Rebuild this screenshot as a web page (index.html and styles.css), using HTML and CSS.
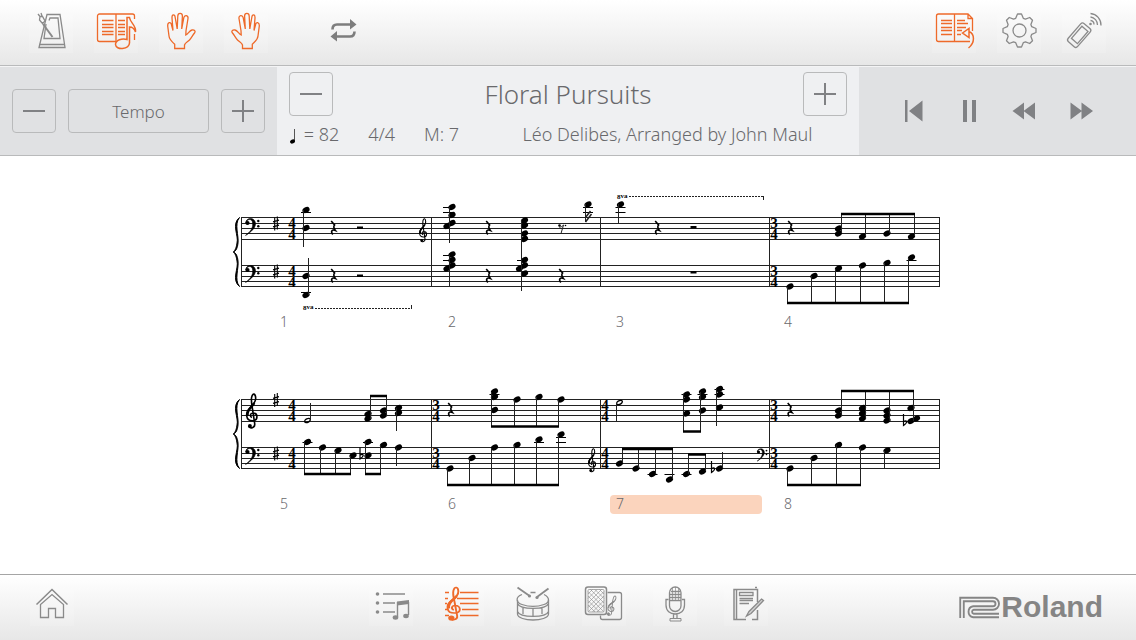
FILE: index.html
```html
<!DOCTYPE html>
<html lang="en">
    <head>
        <meta charset="utf-8">
        <title>Floral Pursuits</title>
        <link rel="stylesheet" href="styles.css">
    </head>
    <body>
        <svg class="defs" aria-hidden="true">
            <defs>
                <ellipse id="n" rx="3.8" ry="2.7" transform="rotate(-28)" />
                <ellipse id="half" rx="3.1" ry="1.8" transform="rotate(-28)" fill="none" stroke="#000" stroke-width="1.3" />
                <path id="led" d="M-5 0H5" stroke="#000" />
                <path id="rest" d="M-1.8-7 1.6-3C0-1.400.4-.2 2.400 2.400-.8 1.200-2.800 3-.2 6.400" fill="none" stroke="#000" stroke-width="1.6" />
                <path id="hrest" d="M-3-1H3V1.5H-3z" />
                <path id="sharp" d="M-1.3-6V7M1.3-7V6M-3-1.6 3-3.4M-3 3.4 3 1.6" stroke="#000" stroke-width="1.1" />
                <path id="flat" d="M-1.5-8V3.5C3 .5 2.5-2.5-1.5-.5" fill="none" stroke="#000" stroke-width="1.2" />
                <path id="treble" d="M-.6 2.6C-3 1.6-2.6-1.9.6-2 5.6-2 6 5.6.2 5.8-7 6-7.6-2.6-2.4-7.2.8-10 3.4-13 3.2-17 3-21.5.2-22.6-.9-17.6-1.6-14-.6-9.6 0-6L2.2 8.6C2.8 12.8-2.6 14.4-3.8 11" fill="none" stroke="currentColor" stroke-width="1.6" />
                <g id="gclef">
                    <use href="#treble" />
                    <path d="M-4.8 1C-5.6-3-3.8-5.6-1-8.4L1.8-12" fill="none" stroke="currentColor" stroke-width="2.4" />
                    <circle cx="-2.6" cy="11" r="2" fill="currentColor" />
                </g>
                <g id="fclef">
                    <circle cx="0" cy="0" r="2.1" />
                    <path d="M-1.6 0C-2-5.6 7.4-6.6 8 .4 8.4 6-.2 11.6-2 12.4 3.4 8.4 5.4 5 5.2.4 5-5.2-.8-4.2-1.6 0z" stroke="#000" stroke-width=".6" />
                    <circle cx="10.8" cy="-2" r="1.2" />
                    <circle cx="10.8" cy="3.2" r="1.2" />
                </g>
                <g id="staves" fill="none" stroke="#222">
                    <path d="M241 217.5H940M241 223.5H940M241 228.5H940M241 233.5H940M241 239.5H940" />
                    <path d="M241 265.5H940M241 271.5H940M241 276.5H940M241 281.5H940M241 286.5H940" />
                    <path d="M241.5 217V287M431.5 217V287M600.5 217V287M769.5 217V287M939.5 217V287" />
                    <path d="M239.500 217.500C231 224 239 236 237 243 236.500 247 235.500 250 233.500 252 235.500 254 236.500 257 237 261 239 268 231 280 239.500 286.500 234 280 239 268 238 261 237.500 256 236 253 233.500 252 236 251 237.500 248 238 243 239 236 234 224 239.500 217.500z" fill="#000" stroke="#000" />
                </g>
                <path id="hand" d="M15.700 39.500V35.300C12 32 10.200 30 10 27L8.700 17C8.500 13 12 12.500 12.400 15.500L14 21.500 13 9C12.800 5 15.800 5 16.200 8.500L18.200 20 18.800 7C19 3.400 23.300 3.400 23.400 7L22.700 20 24.800 8.600C25.500 5.500 29.500 6 29 9.500L27 21.700 26.800 26C29 25 30.600 21.500 33 21 35.500 20.600 37 22 35.500 24 33.500 26.500 32.500 29 30.500 31 28.500 33 26 34 25.500 36V39.500z" />
            </defs>
        </svg>

        <header class="bar topbar">
            <button class="icon" aria-label="Metronome">
                <svg viewBox="0 0 44 44"><path d="M18 5.500H31L36 38.500H10Z" /><path d="M10.500 35.500H35.500M17 15 15 29.500H31L29 9H21L20 11.500" /><path d="M14 15 23.500 28" stroke-width="2" /><path d="M9 5 11 7.500 10.500 11 13.500 14.500 16 12 13.500 7.500 11 7.500M12 4 13 7" /></svg>
            </button>
            <button class="icon on" aria-label="Score with notes">
                <svg viewBox="0 0 44 44">
                    <path d="M22 32.500H5.500a2 2 0 0 1-2-2V7a2 2 0 0 1 2-2H38.500a2 2 0 0 1 2 2V10M40.500 25V31M22 5V32.500" />
                    <path d="M8 11.500H19.500M8 15.500H19.500M8 18.500H19.500M8 22.500H19.500M8 25.500H19.500M24 11.500H31M24 15.500H31M24 18.500H31M24 22.500H31M24 25.500H31" />
                    <path d="M33 30V8.500H35.500C36 14 42.500 16 41.500 23 40 18.500 37.500 18 35.500 18V34C35 40.500 22 41.500 21.500 35.500 21.500 31 28 29 33 30.500z" stroke-width="1.500" />
                </svg>
            </button>
            <button class="icon on" aria-label="Left hand">
                <svg viewBox="0 0 44 44"><use href="#hand" /></svg>
            </button>
            <button class="icon on" aria-label="Right hand">
                <svg viewBox="0 0 44 44"><use href="#hand" transform="translate(44) scale(-1 1)" /></svg>
            </button>
            <button class="icon plain repeat" aria-label="Repeat">
                <svg viewBox="0 0 44 44"><path d="M10.500 20.500C10.500 17 12 15.500 15 15.500H29M32.500 22.500C32.500 26 31 27.500 28 27.500H14" stroke-width="2.600" /><path class="solid" d="M28 10 34.500 15.500 28 20.500zM15 22 8.500 27.500 15 32.500z" /></svg>
            </button>
            <button class="icon on first-right" aria-label="Page turning">
                <svg viewBox="0 0 44 44">
                    <path d="M38 32.500H6.500a2 2 0 0 1-2-2V7a2 2 0 0 1 2-2H36L40.500 9.500V22M36 5V9.500H40.500M22.500 5V32.500" />
                    <path d="M9 11.500H20M9 14.500H20M9 18.500H20M9 21.500H20M9 25.500H20M25 11.500H33M25 14.500H36M25 18.500H34M25 21.500H30M25 25.500H29" />
                    <path d="M30.500 24 37 19.500V28.500zM37 22.500C43 25 43 34 36.500 39" stroke-width="1.500" />
                </svg>
            </button>
            <button class="icon" aria-label="Settings">
                <svg viewBox="0 0 44 44"><g transform="translate(22.500 21.500)"><path d="M-3.800-12.200-2-16.500H2L3.800-12.200 6-11.400 10.200-13 13-10.200 11.400-6 12.200-3.800 16.500-2V2L12.200 3.800 11.400 6 13 10.200 10.200 13 6 11.400 3.800 12.200 2 16.500H-2L-3.800 12.200-6 11.400-10.200 13-13 10.200-11.400 6-12.200 3.800-16.500 2V-2L-12.200-3.800-11.400-6-13-10.200-10.200-13-6-11.400z" stroke-linejoin="round" /><circle r="6.500" /></g></svg>
            </button>
            <button class="icon" aria-label="Wireless connection">
                <svg viewBox="0 0 44 44"><g transform="rotate(41 17 26)"><rect x="11" y="14" width="12.500" height="24" rx="2.500" /><path d="M13.500 17.500H21.500V33.500H13.500z" /></g><path d="M28.500 11.500A4 4 0 0 1 32 15.500M28.500 8A8 8 0 0 1 35.500 16M28.500 4.500A11.500 11.500 0 0 1 39 16.500" /><circle class="solid" cx="28.500" cy="15" r="1.300" /></svg>
            </button>
        </header>

        <section class="panel">
            <div class="tempo">
                <button class="step" aria-label="Decrease tempo"><svg viewBox="0 0 44 44"><path d="M11 22H33" /></svg></button>
                <button class="step wide">Tempo</button>
                <button class="step" aria-label="Increase tempo"><svg viewBox="0 0 44 44"><path d="M11 22H33M22 11V33" /></svg></button>
            </div>
            <div class="song">
                <div class="song-title">
                    <button class="step" aria-label="Previous song"><svg viewBox="0 0 44 44"><path d="M11 22H33" /></svg></button>
                    <h1>Floral Pursuits</h1>
                    <button class="step" aria-label="Next song"><svg viewBox="0 0 44 44"><path d="M11 22H33M22 11V33" /></svg></button>
                </div>
                <div class="song-info">
                    <span><svg class="beat" viewBox="0 0 8 18"><path d="M5.500 2V15" stroke="#555" /><ellipse cx="3.500" cy="14.500" rx="2.600" ry="2" transform="rotate(-25 3.500 14.500)" /></svg> = 82</span>
                    <span>4/4</span>
                    <span>M: 7</span>
                    <span class="composer">Léo Delibes, Arranged by John Maul</span>
                </div>
            </div>
            <div class="transport">
                <button aria-label="Back to start"><svg viewBox="0 0 56 44"><path d="M19 11H21.500V33H19zM23 22 36.500 11.500V32.500z" /></svg></button>
                <button aria-label="Pause"><svg viewBox="0 0 56 44"><path d="M21 11H25V33H21zM30 11H34V33H30z" /></svg></button>
                <button aria-label="Rewind"><svg viewBox="0 0 56 44"><path d="M14.500 22 26 13.500V30.500zM25.500 22 37 13.500V30.500z" /></svg></button>
                <button aria-label="Fast forward"><svg viewBox="0 0 56 44"><path d="M16.500 13.500 28 22 16.500 30.500zM27.500 13.500 39 22 27.500 30.500z" /></svg></button>
            </div>
        </section>

        <main class="score">
            <section class="system">
                <svg viewBox="192 182 752 131" role="img" aria-label="Measures 1 to 4">
                    <use href="#staves" />
                    <use href="#fclef" x="247.500" y="223" />
                    <use href="#fclef" x="247.500" y="270" />
                    <use href="#sharp" x="276" y="223.500" />
                    <use href="#sharp" x="276" y="271.500" />
                    <g class="time">
                        <text x="292" y="228">4</text><text x="292" y="239">4</text>
                        <text x="292" y="276">4</text><text x="292" y="287">4</text>
                        <text x="774" y="228">3</text><text x="774" y="239">4</text>
                        <text x="774" y="276">3</text><text x="774" y="287">4</text>
                    </g>
                    <text class="octave" x="303" y="310">8<tspan dy="-1">va</tspan></text>
                    <path class="dots" d="M315 308.500H411" />
                    <path class="stem" d="M411.500 309V305" />
                    <text class="octave" x="617" y="199">8<tspan dy="-1">va</tspan></text>
                    <path class="dots" d="M629 196.500H763" />
                    <path class="stem" d="M763.500 196V200" />

                    <!-- measure 1 -->
                    <use href="#n" x="306" y="210" /><use href="#led" x="306" y="212.500" /><use href="#n" x="306" y="228" />
                    <use href="#n" x="306" y="276" /><use href="#n" x="306" y="295" /><use href="#led" x="306" y="292.500" />
                    <path class="stem" d="M303.500 210V247M308.500 258V295" />
                    <use href="#rest" x="333" y="228" /><use href="#rest" x="333" y="276" />
                    <use href="#hrest" x="360" y="227.500" /><use href="#hrest" x="360" y="275.500" />
                    <use href="#gclef" transform="translate(423.500 233) scale(.68)" />

                    <!-- measure 2 -->
                    <use href="#n" x="452" y="207" /><use href="#n" x="452" y="215" /><use href="#n" x="452" y="223" /><use href="#n" x="447" y="226" />
                    <use href="#n" x="452" y="254.500" /><use href="#n" x="452" y="260" /><use href="#n" x="452" y="265.500" /><use href="#n" x="447" y="268.500" />
                    <use href="#led" x="448" y="207.500" /><use href="#led" x="448" y="212.500" /><use href="#led" x="448" y="255.500" /><use href="#led" x="448" y="260.500" />
                    <use href="#rest" x="488" y="228" /><use href="#rest" x="488" y="276" />
                    <use href="#n" x="524.500" y="220.500" /><use href="#n" x="524.500" y="225.500" /><use href="#n" x="524.500" y="233.500" /><use href="#n" x="524.500" y="239" />
                    <use href="#n" x="524.500" y="260" /><use href="#n" x="524.500" y="265.500" /><use href="#n" x="519.500" y="268.500" /><use href="#n" x="524.500" y="273.500" />
                    <use href="#led" x="522" y="260.500" />
                    <circle cx="559.500" cy="225.500" r="1.300" /><path class="stem" d="M559 227C561 227.500 562.500 226 563.500 225L561 233.500" /><circle cx="565.500" cy="225.500" r=".8" />
                    <use href="#rest" x="561" y="276" />
                    <use href="#n" x="588" y="204.500" /><use href="#led" x="588" y="207.500" /><use href="#led" x="588" y="212.500" />
                    <path class="stem" d="M449.500 207V243M449.500 255V287M521.500 220V291M585.500 204V222" />
                    <path class="stem" d="M585.500 217.500 590.500 211M585.500 222 591.500 214" stroke-width="1.500" />

                    <!-- measure 3 -->
                    <use href="#n" x="620.500" y="204.500" /><use href="#led" x="620.500" y="207.500" /><use href="#led" x="620.500" y="212.500" />
                    <path class="stem" d="M618.500 204V223" />
                    <use href="#rest" x="657" y="228" /><use href="#hrest" x="693.500" y="227" /><use href="#hrest" x="693.500" y="272" />

                    <!-- measure 4 -->
                    <use href="#rest" x="790" y="228" />
                    <use href="#n" x="838.500" y="228.500" /><use href="#n" x="838.500" y="233.500" /><use href="#n" x="862.500" y="236.500" /><use href="#n" x="887" y="233.500" /><use href="#n" x="911.500" y="236.500" />
                    <use href="#n" x="790" y="286.500" /><use href="#n" x="814" y="276" /><use href="#n" x="838.500" y="268.500" /><use href="#n" x="862.500" y="265.500" /><use href="#n" x="887" y="263" /><use href="#n" x="911.500" y="257.500" />
                    <use href="#led" x="911.500" y="260.500" />
                    <path class="stem" d="M841.500 233V214M865.500 236V214M889.500 233V214M914.500 236V214M787.500 287V303M811.500 276V303M835.500 269V303M860.500 266V303M884.500 263V303M908.500 258V303" />
                    <path class="beam" d="M841 214H915M787 303H909" />
                </svg>
                <ol class="measures" start="1">
                    <li>1</li>
                    <li>2</li>
                    <li>3</li>
                    <li>4</li>
                </ol>
            </section>

            <section class="system">
                <svg viewBox="192 182 752 131" role="img" aria-label="Measures 5 to 8">
                    <use href="#staves" />
                    <use href="#gclef" x="252.500" y="233" />
                    <use href="#fclef" x="247.500" y="270" />
                    <use href="#sharp" x="276" y="218" />
                    <use href="#sharp" x="276" y="271.500" />
                    <g class="time">
                        <text x="292" y="228">4</text><text x="292" y="239">4</text>
                        <text x="292" y="276">4</text><text x="292" y="287">4</text>
                        <text x="436" y="228">3</text><text x="436" y="239">4</text>
                        <text x="436" y="276">3</text><text x="436" y="287">4</text>
                        <text x="605" y="228">4</text><text x="605" y="239">4</text>
                        <text x="605" y="276">4</text><text x="605" y="287">4</text>
                        <text x="774" y="228">3</text><text x="774" y="239">4</text>
                        <text x="774" y="276">3</text><text x="774" y="287">4</text>
                    </g>

                    <!-- measure 5 -->
                    <use href="#half" x="307.500" y="238.500" />
                    <use href="#n" x="368" y="232" /><use href="#n" x="368" y="236.500" /><use href="#n" x="383.500" y="228.500" /><use href="#n" x="383.500" y="233.500" /><use href="#n" x="398.500" y="226" /><use href="#n" x="398.500" y="231" />
                    <use href="#n" x="307.500" y="260" /><use href="#n" x="322.500" y="265.500" /><use href="#n" x="338" y="268.500" /><use href="#n" x="353" y="273.500" />
                    <use href="#n" x="368" y="260" /><use href="#n" x="368" y="273.500" /><use href="#n" x="383.500" y="263" /><use href="#n" x="398.500" y="265.500" />
                    <use href="#led" x="307.500" y="260.500" /><use href="#led" x="368" y="260.500" /><use href="#flat" x="361.500" y="273.500" />
                    <path class="stem" d="M310.500 238V221M370.500 237V214M386.500 234V214M396.500 226V249M304.500 260V292M320.500 266V292M335.500 269V292M350.500 274V292M365.500 260V292M380.500 263V292M396.500 266V284" />
                    <path class="beam" d="M370 214H387M304 292H351M365 292H381" />

                    <!-- measure 6 -->
                    <use href="#rest" x="450" y="228" />
                    <use href="#n" x="494.500" y="209.500" /><use href="#n" x="494.500" y="215" /><use href="#n" x="494.500" y="228" /><use href="#n" x="517" y="217.500" /><use href="#n" x="539" y="215" /><use href="#n" x="561" y="217.500" />
                    <use href="#n" x="450" y="286.500" /><use href="#n" x="472" y="276" /><use href="#n" x="494.500" y="265.500" /><use href="#n" x="517" y="263" /><use href="#n" x="539" y="257.500" /><use href="#n" x="561" y="252.500" />
                    <use href="#led" x="494.500" y="212.500" /><use href="#led" x="539" y="260.500" /><use href="#led" x="561" y="260.500" /><use href="#led" x="561" y="255.500" />
                    <path class="stem" d="M491.500 210V245M514.500 218V245M536.500 215V245M558.500 218V245M447.500 287V303M469.500 276V303M491.500 266V303M514.500 263V303M536.500 258V303M558.500 253V303" />
                    <path class="beam" d="M491 244.500H559M447 303H559" />
                    <use href="#gclef" transform="translate(592.500 281) scale(.68)" />

                    <!-- measure 7 -->
                    <use href="#half" x="619.500" y="220.500" />
                    <use href="#n" x="686.500" y="212.500" /><use href="#n" x="686.500" y="217.500" /><use href="#n" x="686.500" y="231.500" />
                    <use href="#n" x="702.500" y="209.500" /><use href="#n" x="702.500" y="215" /><use href="#n" x="702.500" y="228.500" />
                    <use href="#n" x="719.500" y="207" /><use href="#n" x="719.500" y="212.500" /><use href="#n" x="719.500" y="225.500" />
                    <use href="#led" x="686.500" y="212.500" /><use href="#led" x="702.500" y="212.500" /><use href="#led" x="719.500" y="212.500" /><use href="#led" x="719.500" y="207.500" />
                    <use href="#n" x="619.500" y="281.500" /><use href="#n" x="636" y="286.500" /><use href="#n" x="652.500" y="292" /><use href="#n" x="669.500" y="297.500" />
                    <use href="#n" x="686.500" y="292" /><use href="#n" x="702.500" y="289.500" /><use href="#n" x="719.500" y="286.500" />
                    <use href="#led" x="652.500" y="292.500" /><use href="#led" x="669.500" y="292.500" /><use href="#led" x="686.500" y="292.500" /><use href="#flat" x="713" y="287" />
                    <path class="stem" d="M616.500 221V239M683.500 212V250M700.500 210V250M716.500 207V244M622.500 281V267M638.500 286V267M655.500 292V267M672.500 297V267M688.500 292V272M705.500 289V272M722.500 286V270" />
                    <path class="beam" d="M683 249.500H701M622 267H673M688 272.500H706" />
                    <use href="#fclef" transform="translate(758.500 270) scale(.74)" />

                    <!-- measure 8 -->
                    <use href="#rest" x="789.500" y="228" />
                    <use href="#n" x="838.500" y="228.500" /><use href="#n" x="838.500" y="233.500" />
                    <use href="#n" x="862.500" y="226" /><use href="#n" x="862.500" y="231" /><use href="#n" x="862.500" y="236.500" />
                    <use href="#n" x="887" y="228.500" /><use href="#n" x="887" y="233.500" /><use href="#n" x="887" y="238.500" />
                    <use href="#n" x="911" y="226" /><use href="#n" x="916.500" y="236.500" /><use href="#n" x="911" y="239" /><use href="#flat" x="905" y="240" />
                    <use href="#n" x="790" y="286.500" /><use href="#n" x="814" y="276" /><use href="#n" x="838.500" y="263" /><use href="#n" x="862.500" y="265.500" /><use href="#n" x="887" y="268.500" />
                    <path class="stem" d="M841.500 234V209M865.500 237V209M889.500 239V209M913.500 239V209M787.500 287V303M811.500 276V303M836.500 263V303M860.500 266V303M884.500 269V287" />
                    <path class="beam" d="M841 209H914M787 303H861" />
                </svg>
                <ol class="measures" start="5">
                    <li>5</li>
                    <li>6</li>
                    <li class="current">7</li>
                    <li>8</li>
                </ol>
            </section>
        </main>

        <footer class="bar bottombar">
            <button class="icon" aria-label="Home">
                <svg viewBox="0 0 44 44"><path d="M6.500 22.500 22 7.500 37.500 22.500" stroke-width="1.500" /><path d="M10.500 22.500V35.500H18.500V26.500H25.500V35.500H33.500V22.500L22 12.500z" /></svg>
            </button>
            <nav class="tabs">
                <button class="icon" aria-label="Song list">
                    <svg viewBox="0 0 44 44"><path d="M14 12H36M14 21H26M14 30H26" stroke-width="1.400" /><path d="M28.500 35V20M39.500 33V20" stroke-width="1.400" /><path class="solid" d="M28 19.500 40 18V22L28 23.500z" /><circle class="solid" cx="8.500" cy="12" r="1.800" /><circle class="solid" cx="8.500" cy="21" r="1.800" /><circle class="solid" cx="8.500" cy="30" r="1.800" /><ellipse class="solid" cx="26.500" cy="35.500" rx="2.800" ry="2.200" /><ellipse class="solid" cx="37" cy="34" rx="2.800" ry="2.200" /></svg>
                </button>
                <button class="icon on" aria-label="Score">
                    <svg viewBox="0 0 44 44"><path d="M5 10.500H9M20 10.500H38.500M5 16.500H8M17 16.500H38.500M5 21.500H7M20 21.500H38.500M5 27.500H7M22 27.500H38.500M5 33.500H9M20 33.500H38.500" stroke-width="1.500" /><use href="#gclef" transform="translate(14.500 25.500) scale(1.200 .96)" /></svg>
                </button>
                <button class="icon" aria-label="Rhythm">
                    <svg viewBox="0 0 44 44"><path d="M11 12.500C4 15 5 20.500 11 22.500 18 25 26 25 33 22.500 39 20.500 39 15.500 33 12.500M19.500 10.500H24.500" /><path d="M6.500 18V32C7 40 37 40 37.500 32V18M6.500 21.500C9 28 35 28 37.500 21.500M6.500 29.500C9 36 35 36 37.500 29.500M12 25V32M22 26V34M31 25V32" /><path d="M6.500 5.500 18 13.500M37.500 6.500 26 15" stroke-width="1.800" /><circle class="solid" cx="18.500" cy="14" r="1.600" /><circle class="solid" cx="26" cy="15.500" r="1.600" /></svg>
                </button>
                <button class="icon" aria-label="Flash cards">
                    <svg viewBox="0 0 44 44"><rect x="3.500" y="5" width="21" height="27.500" rx="2.500" stroke-width="1.500" /><rect x="6" y="7.500" width="16" height="22.500" rx="1" stroke-width=".7" /><path d="M6 12 10.500 7.500M6 16.500 15 7.500M6 21 19.500 7.500M6 25.500 22 9.500M6.500 29.500 22 14M10.500 30 22 18.500M15 30 22 23M22 12 17.500 7.500M22 16.500 13 7.500M22 21 8.500 7.500M22 25.500 6 9.500M21.500 29.500 6 14M17.500 30 6 18.500M13 30 6 23" stroke-width=".6" /><path d="M25.500 10.500H37.500a2 2 0 0 1 2 2V35.500a2 2 0 0 1-2 2H20.500a2 2 0 0 1-2-2V33.500" /><use href="#gclef" transform="translate(29.500 26) rotate(14) scale(.6)" /></svg>
                </button>
                <button class="icon" aria-label="Recorder">
                    <svg viewBox="0 0 44 44"><rect x="16.500" y="5" width="11.500" height="24.500" rx="5.700" /><path d="M16.500 18.500H28M18 9.500H27M17 12.500H28M17 15.500H28" /><path d="M19.500 6V18M22.500 5V18M25.500 6V18" stroke-width=".7" /><path d="M15.500 17.500H13V23C13 29 17 32 22.250 32 27.500 32 31.500 29 31.500 23V17.500H29M20.500 32V36.500M24 32V36.500" /><path d="M17 36.500H28V39H17z" stroke-width="1" /></svg>
                </button>
                <button class="icon" aria-label="Diary">
                    <svg viewBox="0 0 44 44"><path d="M33.500 20V7.500H10V37.500H22M33.500 28V37.500H28M12.500 8V37" stroke-width="1.500" /><path d="M31 5.500H33" /><path d="M15.500 10.500H29V13.500H15.500z" /><path d="M15.500 16.500H29M15.500 18.500H29M15.500 21.500H25" /><path class="pen" d="M37.500 17 39.500 18.500 27 31.500 22.500 34 25 29.500z" /></svg>
                </button>
            </nav>
            <a class="logo" href="#">
                <svg viewBox="0 0 42 24" aria-hidden="true"><path d="M3 23V4.500H34a4 4 0 0 1 0 8.500H14.500a3.800 3.800 0 0 0 0 7.500H40" fill="none" stroke="#858585" stroke-width="5.400" /><path d="M3 24V4.500H34a4 4 0 0 1 0 8.500H14.500a3.800 3.800 0 0 0 0 7.500H41" fill="none" stroke="#f3f3f3" stroke-width="1.700" /></svg>
                <span>Roland</span>
            </a>
        </footer>
    </body>
</html>
```
FILE: styles.css
```css
* {
    box-sizing: border-box;
}
body {
    display: flex;
    flex-direction: column;
    min-height: 100vh;
    margin: 0;
    background: #fff;
    color: #69696c;
    font-family: "Noto Sans", "Open Sans", sans-serif;
    font-weight: 300;
}
button {
    padding: 0;
    border: 0;
    background: none;
    color: inherit;
    font: inherit;
    cursor: pointer;
}
svg {
    display: block;
}
.defs {
    position: absolute;
    width: 0;
    height: 0;
}

/* toolbars */
.bar {
    display: flex;
    background: linear-gradient(#fff, #e7e7e7);
}
.topbar {
    gap: 21px;
    padding: 9px 30px 12px 29px;
    border-bottom: 1px solid #b9babb;
}
.icon {
    width: 44px;
    height: 44px;
    background: rgba(255, 255, 255, 0.15);
    color: #8a8a8a;
}
.icon svg {
    width: 44px;
    height: 44px;
    fill: none;
    stroke: currentColor;
    stroke-width: 1.3;
}
.icon .solid {
    fill: currentColor;
    stroke: none;
}
.icon .pen {
    fill: #d2d2d2;
}
.on {
    color: #ee6a2a;
}
.plain {
    background: none;
}
.repeat {
    margin-left: 33px;
    color: #7d7d7d;
}
.first-right {
    margin-left: auto;
}

/* tempo, song and transport */
.panel {
    display: grid;
    grid-template-columns: 277px 1fr 277px;
    height: 90px;
    border-top: 1px solid #f4f4f5;
    border-bottom: 1px solid #b9babb;
    background: #e0e1e3;
}
.tempo {
    display: flex;
    align-items: center;
    gap: 12px;
    padding: 0 12px;
}
.step {
    width: 44px;
    height: 44px;
    border: 1px solid #b9babb;
    border-radius: 4px;
}
.step svg {
    width: 44px;
    height: 44px;
    margin: -1px;
    stroke: #808184;
    stroke-width: 2;
}
.wide {
    flex: 1;
    font-size: 17px;
}
.song {
    padding: 5px 12px 0;
    background: #eff0f2;
}
.song-title {
    display: flex;
    align-items: center;
    justify-content: space-between;
}
h1 {
    margin: 0;
    font-size: 26px;
    font-weight: 300;
    line-height: 44px;
}
.song-info {
    display: flex;
    gap: 29px;
    font-size: 18px;
    line-height: 36px;
}
.beat {
    display: inline-block;
    width: 8px;
    height: 18px;
    margin-right: 2px;
    vertical-align: -4px;
}
.composer {
    flex: 1;
    text-align: center;
}
.transport {
    display: flex;
    align-items: center;
    padding: 0 27px;
}
.transport svg {
    width: 56px;
    height: 44px;
    fill: #808184;
}

/* sheet music */
.score {
    display: flex;
    flex: 1;
    flex-direction: column;
    align-items: center;
    gap: 32px;
    padding: 26px 0;
}
.system {
    width: 752px;
    color: #000;
}
.stem {
    fill: none;
    stroke: #222;
}
.beam {
    stroke: #000;
    stroke-width: 2.4;
}
.dots {
    stroke: #222;
    stroke-dasharray: 2 1;
}
.time {
    font: bold 15px "Liberation Serif", serif;
    text-anchor: middle;
}
.octave {
    font: bold 7px "Liberation Serif", serif;
}
.measures {
    display: grid;
    grid-template-columns: repeat(4, 152px);
    gap: 16px;
    margin: 0;
    padding: 0 0 0 82px;
    list-style: none;
    color: #69696c;
    font-size: 14px;
    line-height: 18px;
}
.measures li {
    height: 19px;
    padding-left: 6px;
    border-radius: 4px;
}
.measures .current {
    background: #fbd4bd;
}

/* navigation */
.bottombar {
    display: grid;
    grid-template-columns: 1fr auto 1fr;
    padding: 7px 29px 14px 30px;
    border-top: 1px solid #a5a5a5;
}
.tabs {
    display: flex;
    gap: 27px;
}
.logo {
    display: flex;
    align-items: center;
    justify-self: end;
    margin-right: 4px;
    padding-top: 6px;
    color: #858585;
    font: bold 30px "Liberation Sans", sans-serif;
    text-decoration: none;
}
.logo svg {
    width: 42px;
    height: 24px;
}
```
